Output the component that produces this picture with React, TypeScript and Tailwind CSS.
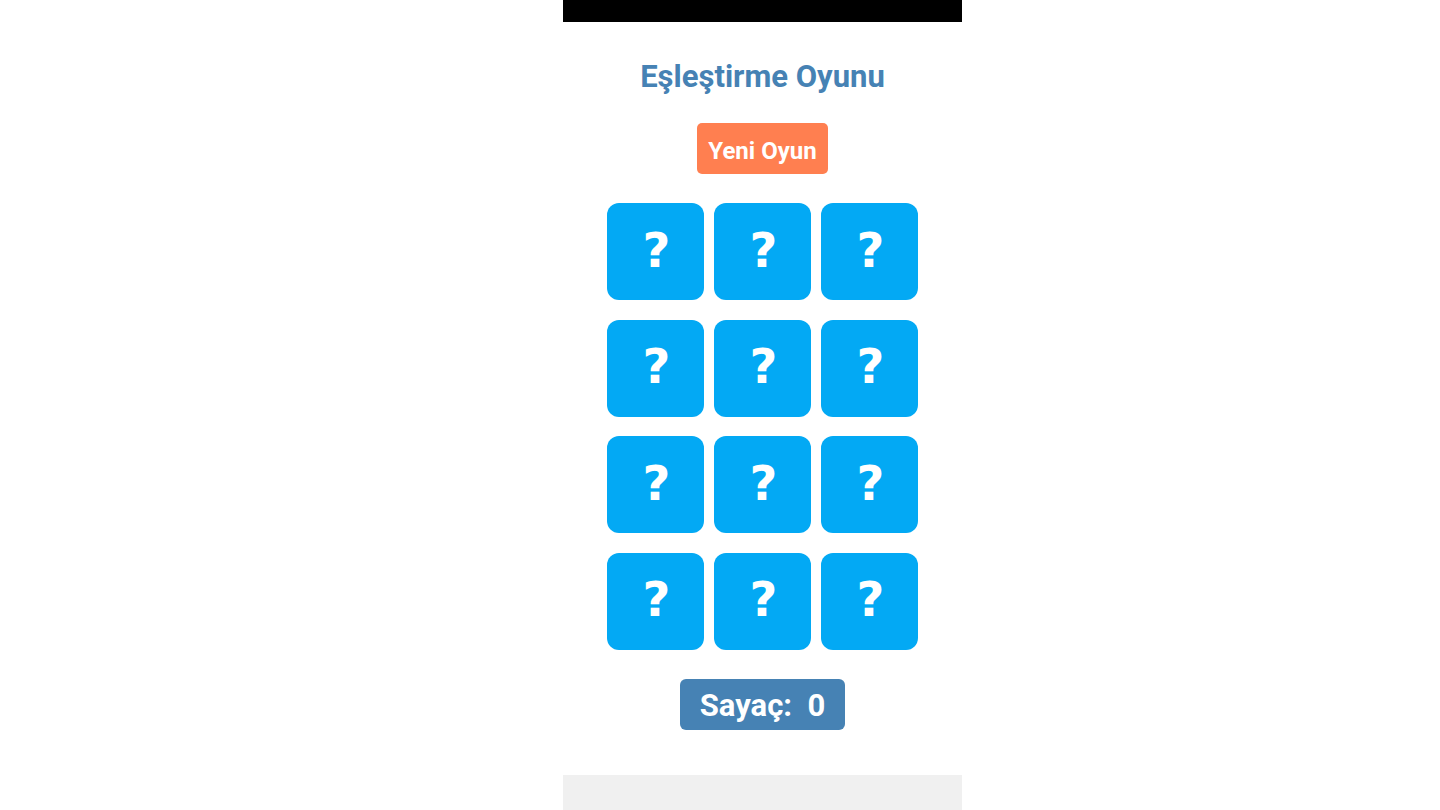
import React from "react"

export default function App() {
  const cards = Array.from({ length: 12 })

  return (
    <div className="min-h-[810px] w-full bg-white">
      <div className="ml-[563px] flex h-[810px] w-[399px] flex-col items-center bg-white font-['Roboto',sans-serif]">
        <div className="h-[22px] w-full bg-black" />
        <h1 className="mt-[38px] text-[31px] font-bold leading-[34px] text-[#4682b4]">Eşleştirme Oyunu</h1>
        <button className="mt-[29px] h-[51px] w-[131px] rounded-[5px] bg-[#ff7f50] pt-[4px] text-[24px] font-bold text-white">
          Yeni Oyun
        </button>
        <div className="mt-[29px] grid grid-cols-[repeat(3,97px)] gap-x-[10px] gap-y-[19.67px]">
          {cards.map((_, i) => (
            <div
              key={i}
              className="flex h-[97px] w-[97px] items-center justify-center rounded-[12px] bg-[#03a9f4] pb-[4px] pl-[2px] font-['DejaVu_Sans',sans-serif] text-[48px] font-bold leading-none text-white"
            >
              ?
            </div>
          ))}
        </div>
        <div className="mt-[29px] flex h-[51px] w-[165px] items-center justify-center rounded-[6px] bg-[#4682b4] pt-[4px] text-[31px] font-bold text-white">
          Sayaç:&nbsp;&nbsp;0
        </div>
        <div className="mt-auto h-[35px] w-full bg-[#f0f0f0]" />
      </div>
    </div>
  )
}
